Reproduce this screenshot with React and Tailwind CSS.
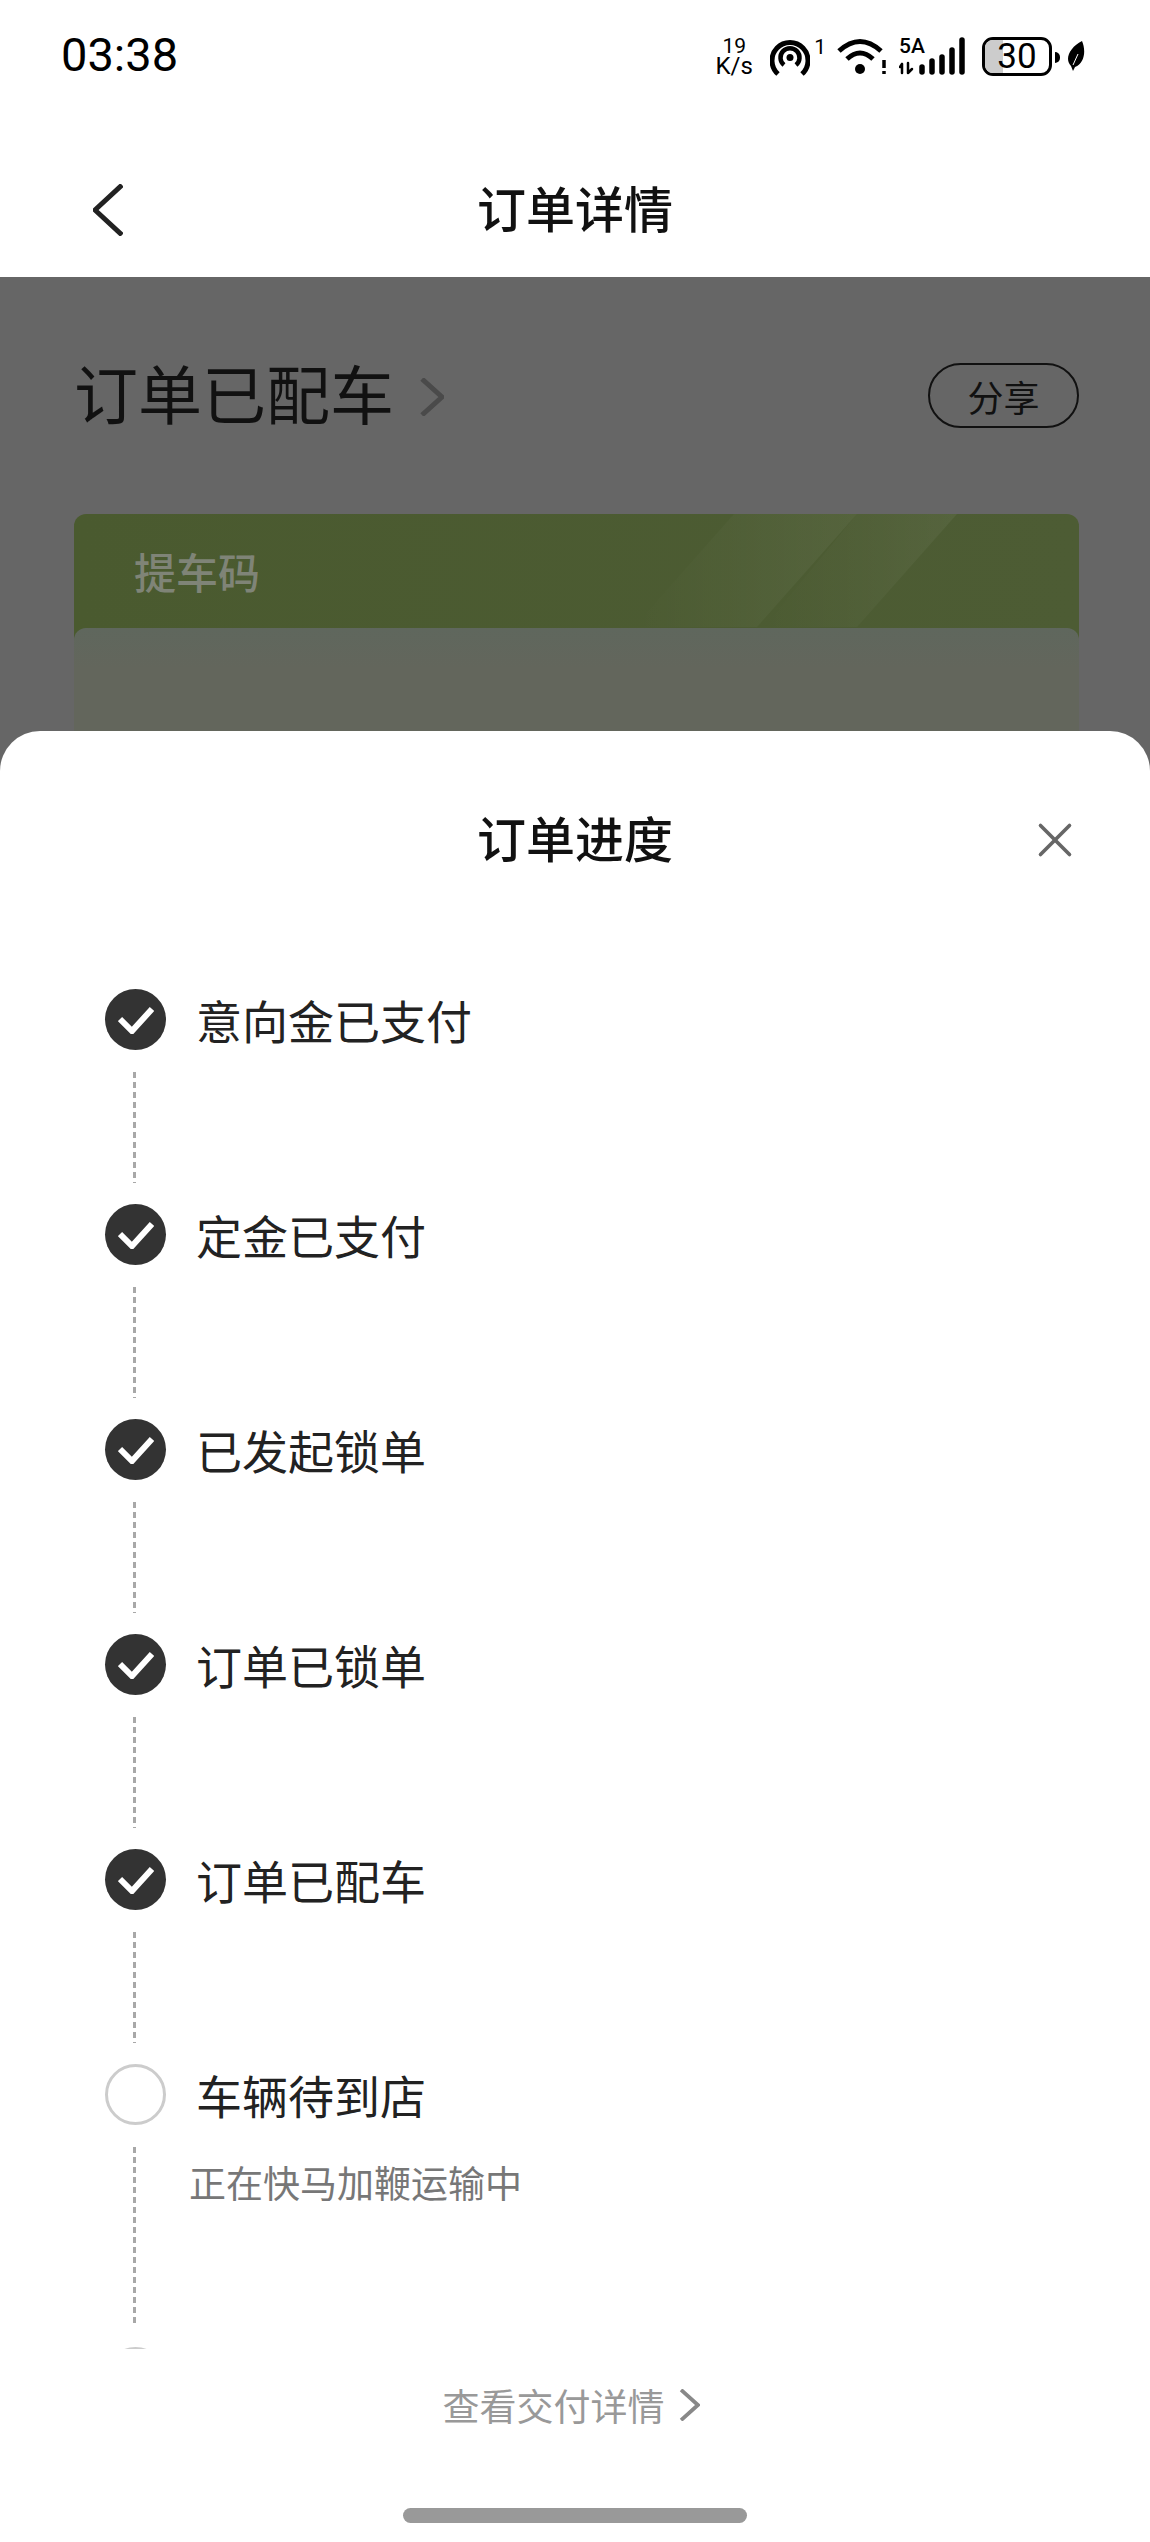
import { X } from 'lucide-react'

const steps = [
  { label: '意向金已支付', done: true },
  { label: '定金已支付', done: true },
  { label: '已发起锁单', done: true },
  { label: '订单已锁单', done: true },
  { label: '订单已配车', done: true },
  { label: '车辆待到店', done: false, note: '正在快马加鞭运输中' },
]

const cjk = "font-['Noto_Sans_CJK_SC','Noto_Sans',sans-serif]"
const dashes = 'w-[3px] bg-[repeating-linear-gradient(to_bottom,#a8a8a8_0,#a8a8a8_6px,transparent_6px,transparent_10px)]'

function Chevron({ className, color = '#222', width = 4 }) {
  return (
    <svg viewBox="0 0 24 38" fill="none" className={className}>
      <path d="M2 1 L22 19 L2 37" stroke={color} strokeWidth={width} />
    </svg>
  )
}

function StatusIcons() {
  return (
    <div className="flex items-start text-black font-['Roboto',sans-serif]">
      <div className="flex w-[36px] flex-col items-center">
        <span className="text-[21px] leading-[19px]">19</span>
        <span className="text-[24px] leading-[21px]">K/s</span>
      </div>
      <svg viewBox="0 0 40 38" fill="none" stroke="#000" className="ml-[18px] mt-[1px] h-[38px] w-[40px]">
        <path d="M8 36 A18 18 0 1 1 32 36" strokeWidth="5" />
        <path d="M14 27 A9.5 9.5 0 1 1 26 27" strokeWidth="4.5" />
        <circle cx="20" cy="19.5" r="3.5" fill="#000" stroke="none" />
      </svg>
      <span className="ml-[4px] text-[21px] leading-[20px]">1</span>
      <svg viewBox="0 0 50 38" fill="none" stroke="#000" className="ml-[11px] mt-[1px] h-[38px] w-[50px]">
        <path d="M2 13 Q23 -6 44 13" strokeWidth="5" />
        <path d="M10 21 Q23 9 36 21" strokeWidth="5" />
        <circle cx="23" cy="31" r="5" fill="#000" stroke="none" />
        <path d="M47 22 V30" strokeWidth="3.5" />
        <path d="M47 33 V36" strokeWidth="3.5" />
      </svg>
      <div className="relative ml-[12px] h-[38px] w-[66px]">
        <span className="absolute left-0 top-0 text-[21px] font-medium leading-[18px]">5A</span>
        <svg viewBox="0 0 66 38" fill="none" stroke="#000" strokeLinecap="round" className="h-[38px] w-[66px]">
          <path d="M3 27 V36 M3 27 L1 30" strokeWidth="2.5" />
          <path d="M9 26 V36 M9 36 L13 32" strokeWidth="2.5" />
          <path d="M23 30 V35" strokeWidth="5.5" />
          <path d="M33 24 V35" strokeWidth="5.5" />
          <path d="M43 20 V35" strokeWidth="5.5" />
          <path d="M53 13 V35" strokeWidth="5.5" />
          <path d="M63 3 V35" strokeWidth="5.5" />
        </svg>
      </div>
      <div className="relative ml-[17px] flex h-[39px] w-[70px] items-center justify-center overflow-hidden rounded-[11px] border-[3px] border-black">
        <div className="absolute inset-y-0 left-0 w-[18px] bg-[#cccccc]" />
        <span className="relative text-[35px] leading-none">30</span>
      </div>
      <div className="ml-[3px] mt-[15px] h-[11px] w-[5px] rounded-r-full bg-black" />
      <svg viewBox="0 0 18 30" className="ml-[7px] mt-[4px] h-[30px] w-[18px]">
        <path d="M15 0 C19 9 18 22 8 26 L6 30 L4 25 C-3 18 3 6 15 0 Z" fill="#000" />
        <path d="M6 24 L11 13" stroke="#fff" strokeWidth="1" />
      </svg>
    </div>
  )
}

function Step({ step, last }) {
  return (
    <div>
      <div className="flex h-[61px] items-center">
        {step.done ? (
          <div className="flex h-[61px] w-[61px] shrink-0 items-center justify-center rounded-full bg-[#333333]">
            <svg viewBox="0 0 36 28" fill="none" className="h-[28px] w-[36px]">
              <path d="M2 13 L14 25 L34 3" stroke="#fff" strokeWidth="6" />
            </svg>
          </div>
        ) : (
          <div className="h-[61px] w-[61px] shrink-0 rounded-full border-[3px] border-[#cccccc]" />
        )}
        {step.label && <span className="ml-[30px] text-[46px] leading-[61px] text-[#222222]">{step.label}</span>}
      </div>
      {!last && (
        <div className={`flex ${step.note ? 'h-[222px]' : 'h-[154px]'} pb-[21px] pt-[22px]`}>
          <div className={`ml-[28px] ${dashes}`} />
          {step.note && (
            <span className="ml-[53px] mt-[17px] text-[37px] leading-[36px] text-[#777777]">{step.note}</span>
          )}
        </div>
      )}
    </div>
  )
}

export default function App() {
  return (
    <div className={`flex h-[2542px] w-[1150px] flex-col overflow-hidden bg-[#666666] ${cjk}`}>
      <header className="h-[277px] shrink-0 bg-white">
        <div className="flex items-start justify-between pl-[61px] pr-[65px] pt-[37px]">
          <span className="font-['Roboto',sans-serif] text-[47px] leading-[36px] text-black">03:38</span>
          <StatusIcons />
        </div>
        <div className="mt-[104px] flex items-start justify-between pl-[93px] pr-[93px]">
          <svg viewBox="0 0 30 52" fill="none" className="mt-[3px] h-[52px] w-[30px]">
            <path d="M29 1 L2 26 L29 51" stroke="#222" strokeWidth="5" />
          </svg>
          <h1 className="text-[49px] font-medium leading-[52px] text-[#111111]">订单详情</h1>
          <div className="w-[30px]" />
        </div>
      </header>

      <section className="h-[454px] shrink-0 overflow-hidden pl-[74px] pr-[71px] pt-[86px]">
        <div className="flex items-start justify-between">
          <div className="flex items-center">
            <span className="text-[64px] leading-[56px] text-[#111111]">订单已配车</span>
            <Chevron className="ml-[26px] mt-[12px] h-[38px] w-[24px]" color="#4a4a4a" width={5} />
          </div>
          <div className="flex h-[65px] w-[151px] items-center justify-center rounded-full border-2 border-[#111111]">
            <span className="text-[36px] leading-none text-[#111111]">分享</span>
          </div>
        </div>
        <div className="relative mt-[86px] h-[300px] overflow-hidden rounded-[12px] bg-[linear-gradient(to_right,#4a5a2f,#4d5c34)] pl-[60px] pt-[32px]">
          <svg viewBox="0 0 1005 114" className="absolute left-0 top-0 h-[114px] w-[1005px]">
            <defs>
              <linearGradient id="cardStripe" x1="0" y1="0" x2="1" y2="0">
                <stop offset="0" stopColor="#ffffff" stopOpacity="0" />
                <stop offset="1" stopColor="#ffffff" stopOpacity="0.05" />
              </linearGradient>
            </defs>
            <polygon points="560,113 660,0 783,0 683,113" fill="url(#cardStripe)" />
            <polygon points="690,113 783,0 883,0 783,113" fill="url(#cardStripe)" />
          </svg>
          <span className="relative text-[42px] font-medium leading-[50px] text-[#7f8477]">提车码</span>
          <div className="absolute inset-x-0 top-[114px] h-[200px] rounded-t-[12px] bg-[linear-gradient(to_bottom,#5f675d,#63665c_40px)]" />
        </div>
      </section>

      <section className="flex min-h-0 flex-1 flex-col rounded-t-[40px] bg-white">
        <div className="flex h-[212px] shrink-0 items-center justify-between px-[66px]">
          <div className="w-[58px]" />
          <h2 className="text-[49px] font-medium leading-[52px] text-[#111111]">订单进度</h2>
          <X size={58} strokeWidth={1.5} color="#666666" className="mt-[6px]" />
        </div>
        <div className="mt-[40px] h-[1366px] shrink-0 overflow-hidden pl-[105px] pt-[6px]">
          {steps.map((step) => (
            <Step key={step.label} step={step} />
          ))}
          <Step step={{ done: false }} last />
        </div>
        <div className="flex flex-col items-center pt-[36px]">
          <div className="flex items-center pr-[8px]">
            <span className="text-[37px] leading-[40px] text-[#999999]">查看交付详情</span>
            <Chevron className="ml-[14px] h-[32px] w-[21px]" color="#888888" width={4.5} />
          </div>
          <div className="mt-[83px] h-[15px] w-[344px] rounded-full bg-[#999999]" />
        </div>
      </section>
    </div>
  )
}
